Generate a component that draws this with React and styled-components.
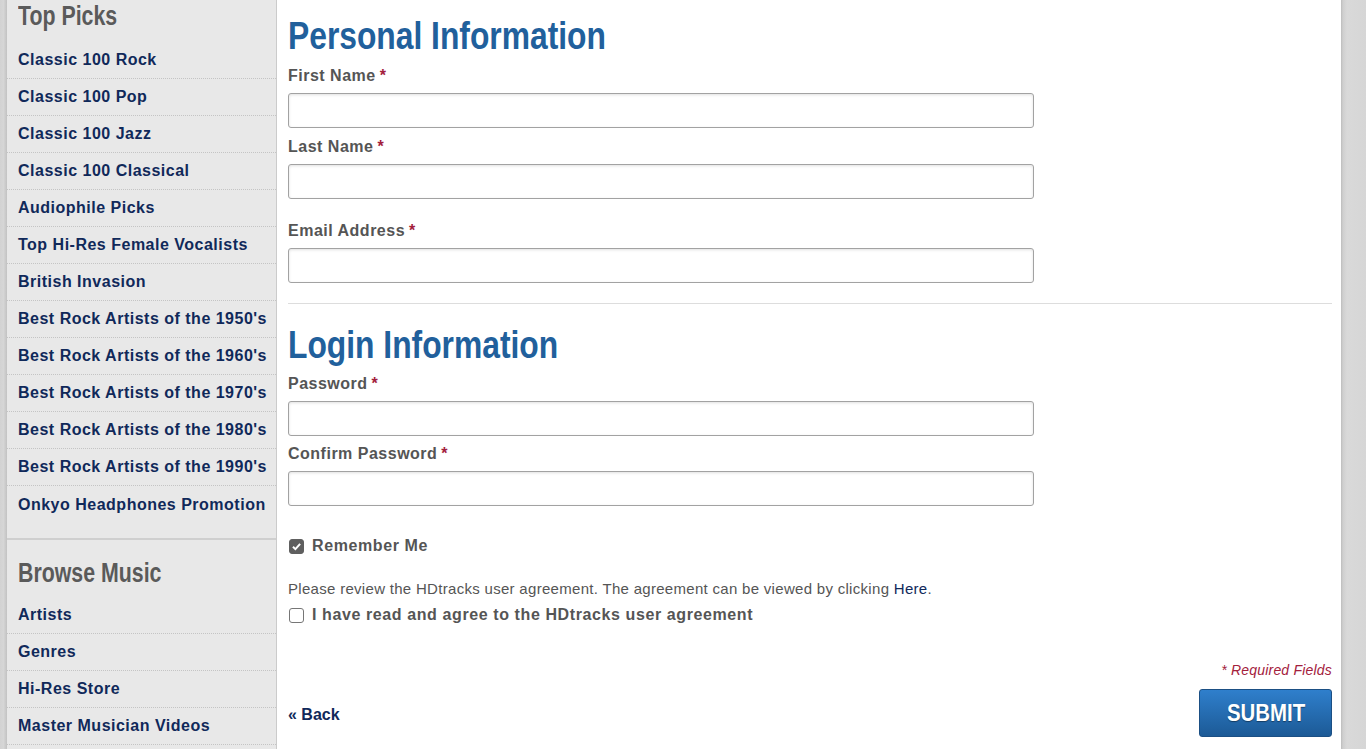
import styled, { createGlobalStyle } from "styled-components";

const GlobalStyle = createGlobalStyle`
  html, body {
    margin: 0;
    padding: 0;
    background: #d4d4d4;
    font-family: "Liberation Sans", Arial, sans-serif;
  }
`;

// no narrow face is installed, so the condensed titles are squeezed horizontally
const Page = styled.div`
  display: flex;
  width: 1366px;
  height: 749px;
  overflow: hidden;
`;

const EdgeStrip = styled.div`
  width: ${(p) => p.width}px;
  flex-shrink: 0;
  background: ${(p) =>
    p.right
      ? "linear-gradient(90deg, #bdbdbd 0px, #cfcfcf 2px, #d9d9d9 6px, #d6d6d6 100%)"
      : "linear-gradient(90deg, #d2d2d2 0%, #d6d6d6 50%, #c2c2c2 100%)"};
`;

const Sidebar = styled.aside`
  width: 269px;
  flex-shrink: 0;
  background: #e8e8e8;
  border-right: 1px solid #cbcbcb;
`;

const SideSection = styled.div`
  padding-bottom: ${(p) => p.bottom || 0}px;
  border-bottom: ${(p) => (p.divided ? "2px solid #cfcfcf" : "none")};
`;

const SideTitle = styled.h3`
  margin: 0 0 0 11px;
  height: ${(p) => p.height}px;
  padding-top: ${(p) => p.top}px;
  box-sizing: border-box;
  font-size: 27px;
  line-height: 30px;
  font-weight: bold;
  color: #5a5a5a;
  white-space: nowrap;
  transform: scaleX(0.79);
  transform-origin: 0 50%;
`;

const SideList = styled.ul`
  list-style: none;
  margin: 0;
  padding: 0;
`;

const SideItem = styled.li`
  height: 37px;
  display: flex;
  align-items: center;
  padding-left: 11px;
  box-sizing: border-box;
  border-bottom: ${(p) => (p.last ? "none" : "1px dotted #c4c4c4")};
  font-size: 16px;
  font-weight: bold;
  letter-spacing: 0.5px;
  color: #10295a;
  white-space: nowrap;
`;

const Main = styled.main`
  width: 1064px;
  flex-shrink: 0;
  background: #ffffff;
  padding: 0 9px 0 11px;
  box-sizing: border-box;
`;

const Heading = styled.h2`
  margin: 0;
  padding-top: ${(p) => p.top}px;
  height: ${(p) => p.height}px;
  box-sizing: border-box;
  font-size: 39px;
  line-height: 44px;
  font-weight: bold;
  color: #21609c;
  white-space: nowrap;
  transform: scaleX(0.815);
  transform-origin: 0 50%;
`;

const Field = styled.div`
  margin-top: ${(p) => p.top || 0}px;
`;

const Label = styled.label`
  display: block;
  font-size: 16px;
  line-height: 20px;
  font-weight: bold;
  letter-spacing: 0.5px;
  color: #555555;
  margin-bottom: 7px;
`;

const Req = styled.span`
  color: #a3203c;
  margin-left: 4px;
`;

const TextInput = styled.input`
  display: block;
  width: 746px;
  height: 35px;
  box-sizing: border-box;
  border: 1px solid #a2a2a2;
  border-radius: 3px;
  box-shadow: inset 0 1px 3px rgba(0, 0, 0, 0.12);
  background: #fff;
  font-size: 16px;
`;

const Rule = styled.hr`
  border: 0;
  border-top: 1px solid #dddddd;
  margin: 20px 0 0;
`;

const CheckRow = styled.label`
  display: flex;
  align-items: center;
  gap: 8px;
  margin-top: ${(p) => p.top}px;
  font-size: 16px;
  font-weight: bold;
  letter-spacing: 0.6px;
  color: #555555;
  line-height: 20px;
`;

const Box = styled.span`
  width: 15px;
  height: 15px;
  box-sizing: border-box;
  border-radius: 3px;
  border: 1px solid ${(p) => (p.checked ? "#5f5f5f" : "#767676")};
  background: ${(p) => (p.checked ? "#5f5f5f" : "#fff")};
  display: flex;
  align-items: center;
  justify-content: center;
  margin-left: 1px;
  flex-shrink: 0;
`;

const Note = styled.p`
  margin: 23px 0 0;
  font-size: 15px;
  line-height: 20px;
  letter-spacing: 0.3px;
  color: #555555;
`;

const NoteLink = styled.span`
  color: #10295a;
`;

const Required = styled.div`
  margin-top: 36px;
  text-align: right;
  font-size: 14px;
  font-style: italic;
  letter-spacing: 0.2px;
  color: #a3203c;
  line-height: 18px;
`;

const Actions = styled.div`
  display: flex;
  justify-content: space-between;
  align-items: center;
  margin-top: 10px;
`;

const BackLink = styled.a`
  margin-top: 4px;
  font-size: 16px;
  font-weight: bold;
  color: #10295a;
  text-decoration: none;
`;

const SubmitButton = styled.button`
  width: 133px;
  height: 48px;
  border: 1px solid #1b4f84;
  border-radius: 3px;
  background: linear-gradient(#2f7fcc, #1c5a96);
  padding: 0;
  display: flex;
  align-items: center;
  justify-content: center;
`;

const SubmitText = styled.span`
  display: inline-block;
  color: #ffffff;
  font-family: "Liberation Sans", Arial, sans-serif;
  font-size: 24px;
  font-weight: bold;
  text-shadow: 0 1px 1px rgba(0, 0, 0, 0.4);
  transform: scaleX(0.85);
`;

const topPicks = [
  "Classic 100 Rock",
  "Classic 100 Pop",
  "Classic 100 Jazz",
  "Classic 100 Classical",
  "Audiophile Picks",
  "Top Hi-Res Female Vocalists",
  "British Invasion",
  "Best Rock Artists of the 1950's",
  "Best Rock Artists of the 1960's",
  "Best Rock Artists of the 1970's",
  "Best Rock Artists of the 1980's",
  "Best Rock Artists of the 1990's",
  "Onkyo Headphones Promotion",
];

const browse = ["Artists", "Genres", "Hi-Res Store", "Master Musician Videos"];

function Check({ checked }) {
  return (
    <Box checked={checked}>
      {checked && (
        <svg width="11" height="11" viewBox="0 0 10 10">
          <path d="M1.8 5.2 L4 7.4 L8.3 2.6" fill="none" stroke="#fff" strokeWidth="1.8" />
        </svg>
      )}
    </Box>
  );
}

function InputField({ label, top }) {
  return (
    <Field top={top}>
      <Label>
        {label}
        <Req>*</Req>
      </Label>
      <TextInput type="text" />
    </Field>
  );
}

export default function App() {
  return (
    <>
      <GlobalStyle />
      <Page>
        <EdgeStrip width={7} />
        <Sidebar>
          <SideSection divided bottom={15}>
            <SideTitle height={42} top={1}>Top Picks</SideTitle>
            <SideList>
              {topPicks.map((t, i) => (
                <SideItem key={t} last={i === topPicks.length - 1}>
                  {t}
                </SideItem>
              ))}
            </SideList>
          </SideSection>
          <SideSection>
            <SideTitle height={57} top={18}>Browse Music</SideTitle>
            <SideList>
              {browse.map((t) => (
                <SideItem key={t}>{t}</SideItem>
              ))}
            </SideList>
          </SideSection>
        </Sidebar>
        <Main>
          <Heading height={66} top={14}>Personal Information</Heading>
          <InputField label="First Name" />
          <InputField label="Last Name" top={9} />
          <InputField label="Email Address" top={22} />
          <Rule />
          <Heading height={67} top={19}>Login Information</Heading>
          <InputField label="Password" top={3} />
          <InputField label="Confirm Password" top={8} />
          <CheckRow top={30}>
            <Check checked />
            Remember Me
          </CheckRow>
          <Note>
            Please review the HDtracks user agreement. The agreement can be viewed by clicking <NoteLink>Here</NoteLink>.
          </Note>
          <CheckRow top={6}>
            <Check />
            I have read and agree to the HDtracks user agreement
          </CheckRow>
          <Required>* Required Fields</Required>
          <Actions>
            <BackLink href="#">« Back</BackLink>
            <SubmitButton>
              <SubmitText>SUBMIT</SubmitText>
            </SubmitButton>
          </Actions>
        </Main>
        <EdgeStrip width={25} right />
      </Page>
    </>
  );
}
